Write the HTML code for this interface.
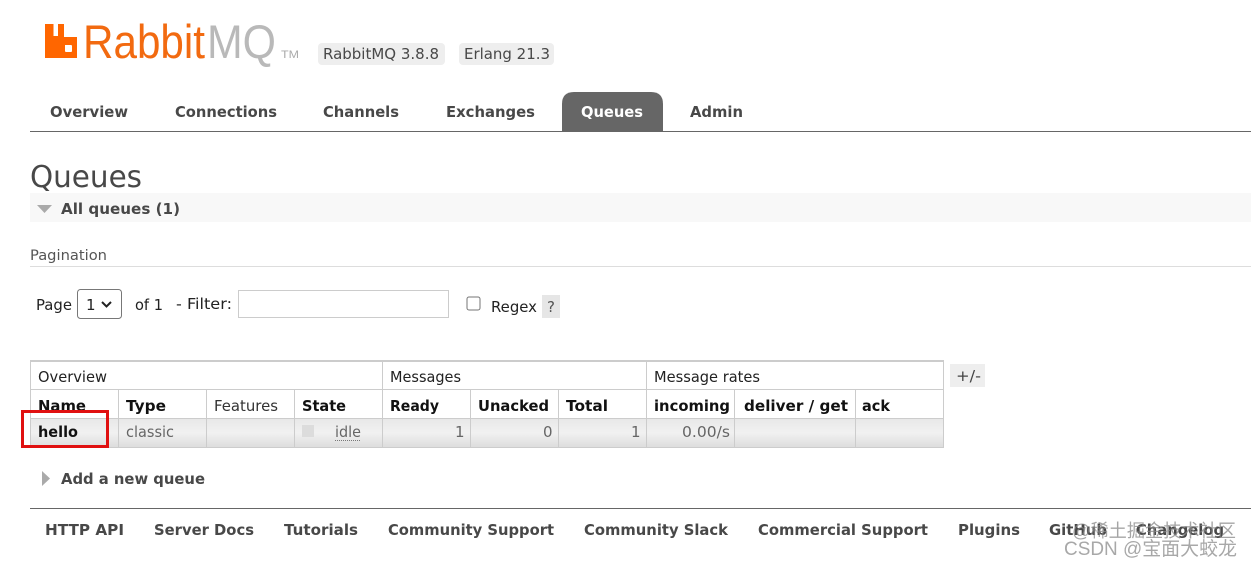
<!DOCTYPE html>
<html><head><meta charset="utf-8"><style>
html,body{margin:0;padding:0;background:#fff;width:1251px;height:567px;overflow:hidden}
svg{display:block}
text{font-family:"DejaVu Sans",sans-serif;font-size:15px;fill:#484848;white-space:pre}
.b{font-weight:bold}
.n{fill:#484848;font-weight:bold}
.t{fill:#222}
.h{fill:#111;font-weight:bold}
.g{fill:#666}
</style></head><body>
<svg width="1251" height="567" viewBox="0 0 1251 567" xmlns="http://www.w3.org/2000/svg">
<defs><linearGradient id="r" x1="0" y1="0" x2="0" y2="1"><stop offset="0" stop-color="#e8e8e8"/><stop offset=".5" stop-color="#f1f1f1"/><stop offset="1" stop-color="#dddddd"/></linearGradient></defs>

<!-- logo -->
<path fill="#ff6600" fill-rule="evenodd" d="M45 24h8.500v12h4.500V24H64v13h13V58H45zM65 45v6q0 1 1 1h5q1 0 1-1v-5q0-1-1-1z"/>
<text x="83" y="58" textLength="122" lengthAdjust="spacingAndGlyphs" style="font-family:'Liberation Sans',sans-serif;font-size:47px;fill:#f26a10">Rabbit</text>
<text x="207" y="58" textLength="69" lengthAdjust="spacingAndGlyphs" style="font-family:'Liberation Sans',sans-serif;font-size:47px;fill:#b9b9b9">MQ</text>
<text x="281" y="58" textLength="18" lengthAdjust="spacingAndGlyphs" style="font-family:'Liberation Sans',sans-serif;font-size:11px;fill:#aaa">TM</text>

<rect x="318" y="43" width="127" height="22" rx="4" fill="#eeeeee"/>
<text x="323" y="59" textLength="116" lengthAdjust="spacingAndGlyphs">RabbitMQ 3.8.8</text>
<rect x="459" y="43" width="95" height="22" rx="4" fill="#eeeeee"/>
<text x="464" y="59" textLength="86" lengthAdjust="spacingAndGlyphs">Erlang 21.3</text>

<!-- nav -->
<path fill="#666" d="M562 132V104q0-12 12-12h77q12 0 12 12v28z"/>
<rect x="30" y="131" width="1221" height="1" fill="#666"/>
<text class="n" x="50" y="117" textLength="78" lengthAdjust="spacingAndGlyphs">Overview</text>
<text class="n" x="175" y="117" textLength="102" lengthAdjust="spacingAndGlyphs">Connections</text>
<text class="n" x="323" y="117" textLength="76" lengthAdjust="spacingAndGlyphs">Channels</text>
<text class="n" x="446" y="117" textLength="89" lengthAdjust="spacingAndGlyphs">Exchanges</text>
<text class="b" style="fill:#fff" x="581" y="117" textLength="62" lengthAdjust="spacingAndGlyphs">Queues</text>
<text class="n" x="690" y="117" textLength="53" lengthAdjust="spacingAndGlyphs">Admin</text>

<!-- heading -->
<text x="30" y="187" textLength="112" lengthAdjust="spacingAndGlyphs" style="font-size:30px;fill:#484848">Queues</text>
<rect x="30" y="193" width="1221" height="29" fill="#f8f8f8"/>
<path fill="#aaa" d="M37 205h15l-7.500 8z"/>
<text class="n" x="61" y="214" textLength="119" lengthAdjust="spacingAndGlyphs">All queues (1)</text>

<text x="30" y="260" textLength="77" lengthAdjust="spacingAndGlyphs" style="font-size:14px;fill:#555">Pagination</text>
<rect x="30" y="266" width="1221" height="1" fill="#ddd"/>

<!-- pagination -->
<text class="t" x="36" y="310" textLength="36" lengthAdjust="spacingAndGlyphs">Page</text>
<rect x="77.500" y="289.500" width="44" height="29" rx="3" fill="#fff" stroke="#777"/>
<text class="t" x="86" y="310">1</text>
<path d="M102 302l4.500 4.500 4.500-4.500" fill="none" stroke="#222" stroke-width="2"/>
<text class="t" x="135" y="310" textLength="28" lengthAdjust="spacingAndGlyphs">of 1</text>
<text class="t" x="176" y="309" textLength="56" lengthAdjust="spacingAndGlyphs">- Filter:</text>
<rect x="238.500" y="290.500" width="210" height="27" fill="#fff" stroke="#ccc"/>
<rect x="467" y="297" width="13" height="13" rx="2" fill="#fff" stroke="#767676"/>
<text class="t" x="491" y="312" textLength="46" lengthAdjust="spacingAndGlyphs">Regex</text>
<rect x="542" y="295" width="18" height="23" fill="#e6e6e6"/>
<text x="547" y="312" style="fill:#555">?</text>

<!-- table -->
<rect x="30.500" y="361" width="913" height="87" fill="#fff"/>
<rect x="31" y="419" width="912" height="28" fill="url(#r)"/>
<g fill="none" stroke="#ccc">
<path stroke-width="2" d="M30 361h914"/>
<path d="M30.500 361v87M943.500 361v87M382.500 361v87M646.500 361v87M30 389.500h914M30 418.500h914M30 447.500h914"/>
<path d="M118.500 389v59M206.500 389v59M294.500 389v59M470.500 389v59M558.500 389v59M734.500 389v59M855.500 389v59"/>
</g>
<text class="t" x="38" y="382" textLength="69" lengthAdjust="spacingAndGlyphs">Overview</text>
<text class="t" x="390" y="382" textLength="71" lengthAdjust="spacingAndGlyphs">Messages</text>
<text class="t" x="654" y="382" textLength="106" lengthAdjust="spacingAndGlyphs">Message rates</text>

<text class="h" x="38" y="411" textLength="48" lengthAdjust="spacingAndGlyphs">Name</text>
<text class="h" x="126" y="411" textLength="40" lengthAdjust="spacingAndGlyphs">Type</text>
<text class="t" style="fill:#333" x="214" y="411" textLength="64" lengthAdjust="spacingAndGlyphs">Features</text>
<text class="h" x="302" y="411" textLength="44" lengthAdjust="spacingAndGlyphs">State</text>
<text class="h" x="390" y="411" textLength="49" lengthAdjust="spacingAndGlyphs">Ready</text>
<text class="h" x="478" y="411" textLength="71" lengthAdjust="spacingAndGlyphs">Unacked</text>
<text class="h" x="566" y="411" textLength="42" lengthAdjust="spacingAndGlyphs">Total</text>
<text class="h" x="654" y="411" textLength="76" lengthAdjust="spacingAndGlyphs">incoming</text>
<text class="h" x="744" y="411" textLength="104" lengthAdjust="spacingAndGlyphs">deliver / get</text>
<text class="h" x="862" y="411" textLength="28" lengthAdjust="spacingAndGlyphs">ack</text>

<text class="h" x="38" y="437" textLength="40" lengthAdjust="spacingAndGlyphs">hello</text>
<text class="g" x="126" y="437" textLength="48" lengthAdjust="spacingAndGlyphs">classic</text>
<rect x="302" y="425" width="12" height="12" fill="#dcdcdc"/>
<text class="g" x="335" y="437" textLength="26" lengthAdjust="spacingAndGlyphs">idle</text>
<path d="M335 440.500h26" stroke="#777" stroke-dasharray="1 1" fill="none"/>
<text class="g" x="455" y="437">1</text>
<text class="g" x="543" y="437">0</text>
<text class="g" x="631" y="437">1</text>
<text class="g" x="682" y="437" textLength="48" lengthAdjust="spacingAndGlyphs">0.00/s</text>

<rect x="950" y="364" width="35" height="23" fill="#eeeeee"/>
<text x="956" y="381" textLength="25" lengthAdjust="spacingAndGlyphs" style="fill:#444">+/-</text>

<rect x="22.500" y="411.500" width="85" height="35" fill="none" stroke="#e01010" stroke-width="3"/>

<!-- add queue -->
<path fill="#aaa" d="M42 471l8 7.500-8 7.500z"/>
<text class="n" x="61" y="484" textLength="144" lengthAdjust="spacingAndGlyphs">Add a new queue</text>

<!-- footer -->
<rect x="30" y="508" width="1221" height="1" fill="#666"/>
<text class="n" x="45" y="535" textLength="79" lengthAdjust="spacingAndGlyphs">HTTP API</text>
<text class="n" x="154" y="535" textLength="100" lengthAdjust="spacingAndGlyphs">Server Docs</text>
<text class="n" x="284" y="535" textLength="74" lengthAdjust="spacingAndGlyphs">Tutorials</text>
<text class="n" x="388" y="535" textLength="166" lengthAdjust="spacingAndGlyphs">Community Support</text>
<text class="n" x="584" y="535" textLength="144" lengthAdjust="spacingAndGlyphs">Community Slack</text>
<text class="n" x="758" y="535" textLength="170" lengthAdjust="spacingAndGlyphs">Commercial Support</text>
<text class="n" x="958" y="535" textLength="62" lengthAdjust="spacingAndGlyphs">Plugins</text>
<text class="n" x="1049" y="535" textLength="58" lengthAdjust="spacingAndGlyphs">GitHub</text>
<text class="n" x="1136" y="535" textLength="88" lengthAdjust="spacingAndGlyphs">Changelog</text>

<!-- watermarks -->
<text x="1072" y="537" textLength="164" lengthAdjust="spacingAndGlyphs" style="font-family:'Liberation Sans','Noto Sans CJK SC',sans-serif;font-size:18px;fill:#888;opacity:.75">@稀土掘金技术社区</text>
<text x="1064" y="555" textLength="173" lengthAdjust="spacingAndGlyphs" style="font-family:'Liberation Sans','Noto Sans CJK SC',sans-serif;font-size:19px;fill:#999;opacity:.85">CSDN @宝面大蛟龙</text>
</svg>
</body></html>
